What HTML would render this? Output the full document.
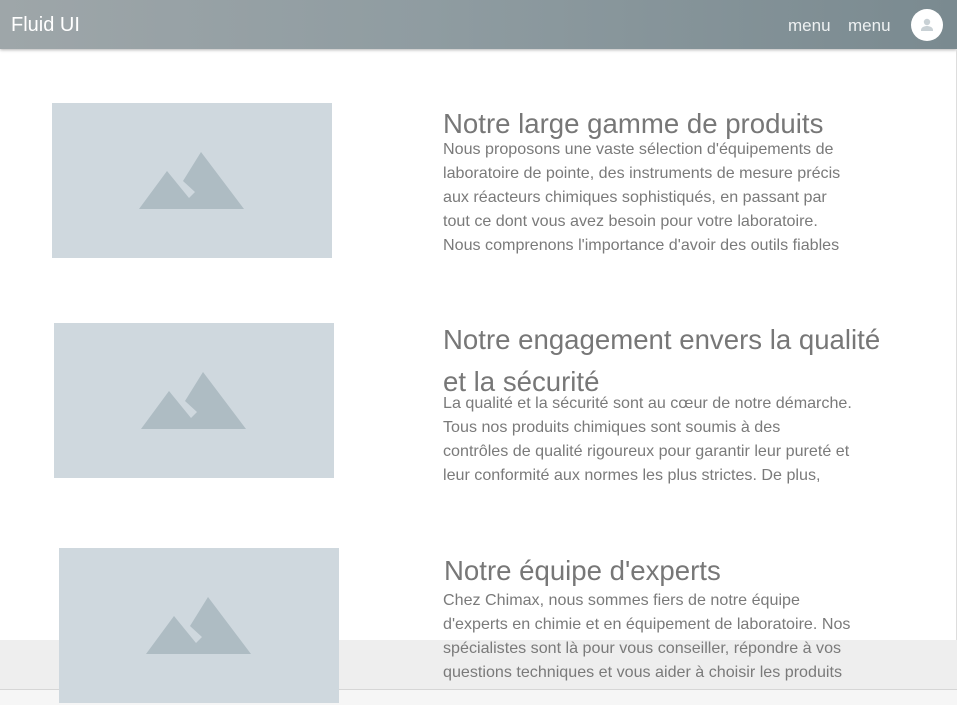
<!DOCTYPE html>
<html><head><meta charset="utf-8"><style>
*{margin:0;padding:0;box-sizing:border-box}
body{width:957px;height:705px;overflow:hidden;background:#fff;font-family:"Liberation Sans",sans-serif;position:relative}
.hdr{position:absolute;left:0;top:0;width:957px;height:49px;background:linear-gradient(90deg,#9ea6a9 0%,#8f9ca1 45%,#7a8a90 100%);box-shadow:0 1px 3px rgba(0,0,0,.3)}
.hdr .t{position:absolute;left:11px;top:14px;font-size:20px;color:#fff}
.hdr .m{position:absolute;top:16px;font-size:17px;color:#eef1f2}
.av{position:absolute;left:911px;top:9px;width:32px;height:32px;border-radius:50%;background:#fff}
.foot{position:absolute;left:0;top:640px;width:957px;height:50px;background:#eeeeee;border-bottom:1px solid #d6d6d6}
.foot2{position:absolute;left:0;top:690px;width:957px;height:15px;background:#f6f6f6}
.img{position:absolute;width:280px;height:155px;background:#cfd8de}
.img svg{position:absolute;left:0;top:0}
h2{position:absolute;font-weight:normal;font-size:27.6px;color:#777;line-height:42px;white-space:nowrap}
p{position:absolute;font-size:16.1px;color:#7a7a7a;line-height:24px;white-space:nowrap;overflow:hidden}
.vr{position:absolute;left:956px;top:49px;width:1px;height:656px;background:#ddd}
</style></head><body>
<div class="hdr"><span class="t">Fluid UI</span><span class="m" style="left:788px">menu</span><span class="m" style="left:848px">menu</span>
<div class="av"><svg width="32" height="32" viewBox="0 0 32 32"><circle cx="16" cy="13" r="3.2" fill="#c9d1d5"/><path d="M10 21c0-3 4-4 6-4s6 1 6 4v1H10z" fill="#c9d1d5"/></svg></div></div>
<div class="vr"></div>

<div class="img" style="left:52px;top:103px"><svg width="280" height="155"><polygon points="87,106 115,68 137,95 143,89 131,78 149,49 192,106" fill="#aebcc3"/></svg></div>
<h2 style="left:443px;top:103px">Notre large gamme de produits</h2>
<p style="left:443px;top:137px;height:120px">Nous proposons une vaste sélection d'équipements de<br>laboratoire de pointe, des instruments de mesure précis<br>aux réacteurs chimiques sophistiqués, en passant par<br>tout ce dont vous avez besoin pour votre laboratoire.<br>Nous comprenons l'importance d'avoir des outils fiables</p>

<div class="img" style="left:54px;top:323px"><svg width="280" height="155"><polygon points="87,106 115,68 137,95 143,89 131,78 149,49 192,106" fill="#aebcc3"/></svg></div>
<h2 style="left:443px;top:319px">Notre engagement envers la qualité<br>et la sécurité</h2>
<p style="left:443px;top:391px;height:96px">La qualité et la sécurité sont au cœur de notre démarche.<br>Tous nos produits chimiques sont soumis à des<br>contrôles de qualité rigoureux pour garantir leur pureté et<br>leur conformité aux normes les plus strictes. De plus,</p>

<div class="foot"></div><div class="foot2"></div>

<div class="img" style="left:59px;top:548px"><svg width="280" height="155"><polygon points="87,106 115,68 137,95 143,89 131,78 149,49 192,106" fill="#aebcc3"/></svg></div>
<h2 style="left:444px;top:550px">Notre équipe d'experts</h2>
<p style="left:443px;top:588px;height:96px">Chez Chimax, nous sommes fiers de notre équipe<br>d'experts en chimie et en équipement de laboratoire. Nos<br>spécialistes sont là pour vous conseiller, répondre à vos<br>questions techniques et vous aider à choisir les produits</p>
</body></html>
